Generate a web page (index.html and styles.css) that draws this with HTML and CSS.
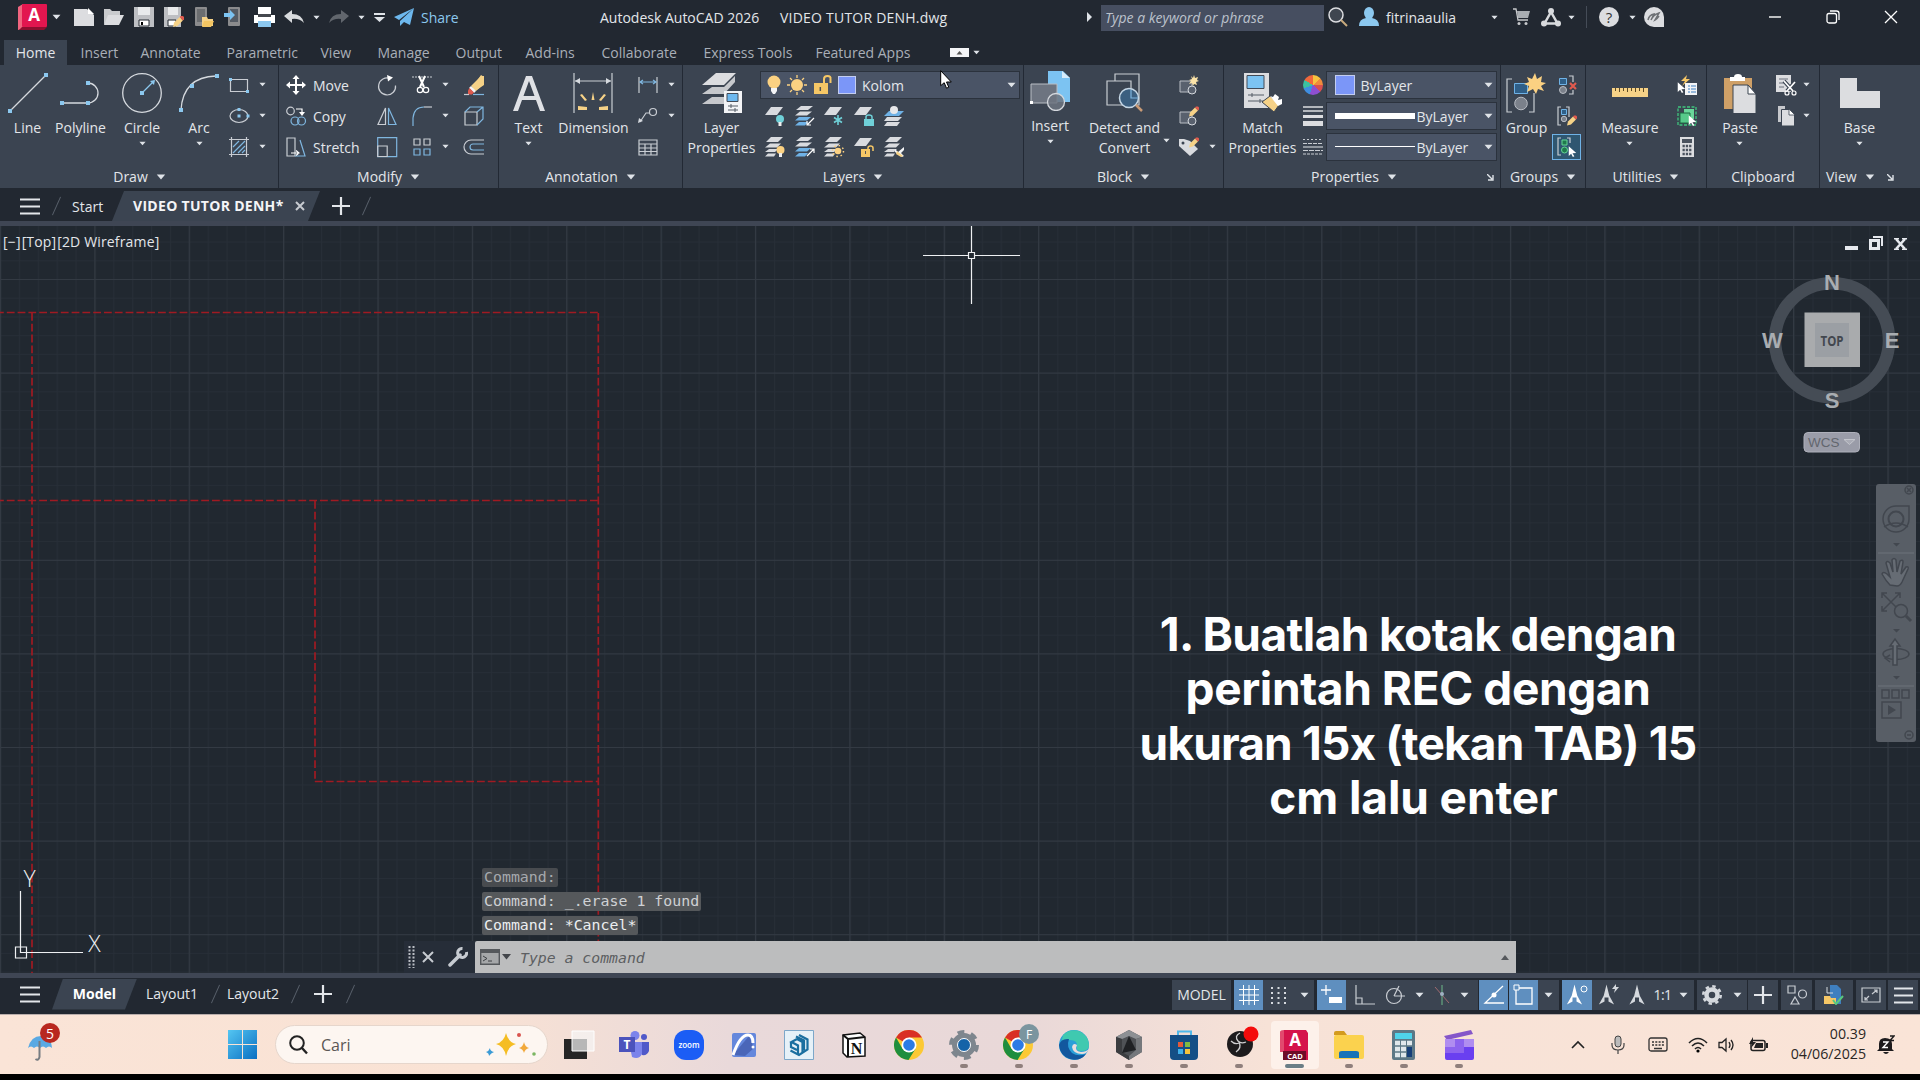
FILE: index.html
```html
<!DOCTYPE html>
<html lang="en">
<head>
<meta charset="utf-8">
<title>Autodesk AutoCAD 2026</title>
<link rel="stylesheet" href="styles.css">
</head>
<body>
<svg class="defs" width="0" height="0">
  <defs>
    <symbol id="car" viewBox="0 0 8 5"><path d="M0.5 0.5h7L4 4.5z" fill="#dfe3e8"/></symbol>
    <symbol id="sheet" viewBox="0 0 20 20"><path d="M7 1h12l-6 8H1z" fill="#d9dbdf"/></symbol>
    <symbol id="stack" viewBox="0 0 20 20"><path d="M6 0h12l-5 5H1z" fill="#d9dbdf"/><path d="M5 6.500h11l-4 4H0zM4 12h9l-3 3H0zM3 16.500h8l-2 3H0z" fill="#d9dbdf"/></symbol>
    <symbol id="stackb" viewBox="0 0 20 20"><path d="M6 0h12l-5 4H1z" fill="#d9dbdf"/><path d="M5 5.500h12l-5 4H0z" fill="#d9dbdf"/><path d="M4 11h12l-4 3.500H0zM4 16h9l-3 3.500H0z" fill="#6fb2e6"/></symbol>
    <symbol id="arr" viewBox="0 0 12 14"><path d="M1 0l10 9-5 .3 2.500 4-2 1-2.300-4.300L1 13z" fill="#fff"/></symbol>
    <symbol id="pencil" viewBox="0 0 10 10"><path d="M0 10l1-4 5-5 3 3-5 5z" fill="#f6d287"/><path d="M6 1l1-1h2l1 1v2L9 4z" fill="#e05a4e"/></symbol>
    <symbol id="chrome" viewBox="0 0 30 30"><circle cx="15" cy="15" r="15" fill="#fcc934"/><path d="M15 15L2 7.500A15 15 0 0 1 28 7.500H15z" fill="#d93025"/><path d="M2 7.500A15 15 0 0 0 14.500 30L21.500 18.700 8.500 18.700z" fill="#1e8e3e"/><circle cx="15" cy="15" r="7.500" fill="#fff"/><circle cx="15" cy="15" r="5.800" fill="#2c7be5"/></symbol>
    <symbol id="compass" viewBox="0 0 20 30"><path d="M10 2l3.500 14 6 11-7-4v-5h-5v5l-7 4 6-11z" fill="currentColor"/></symbol>
  </defs>
</svg>

<header class="titlebar">
  <svg width="30" height="28" viewBox="0 0 30 28"><path d="M1 4l5-3v25l-5 1z" fill="#f0657f"/><rect x="5" y="1" width="25" height="23" rx="1" fill="#e2164f"/><path d="M5 24h25l-3 3H2z" fill="#8d0f2f"/><text x="17" y="18" class="logo-a">A</text></svg>
  <svg width="9" height="6"><use href="#car"/></svg><i></i>
  <svg width="20" height="18" viewBox="0 0 20 18"><path d="M0 1h13l7 6v11H0z" fill="#dcdde0"/><path d="M14 0v6h6z" fill="#fff"/></svg>
  <svg width="20" height="18" viewBox="0 0 20 18"><path d="M0 17V1h6l2 2h8v4H6z" fill="#c9cbce"/><path d="M4 7h16l-5 10H0z" fill="#dcdde0"/></svg>
  <svg width="20" height="20"><path d="M0 0h20v20H0z" fill="#bdbfc3"/><path d="M4 0h12v8H4z" fill="#e8eaec"/><path d="M5 13h10v6H5z" fill="#fff" stroke="#222831"/><path d="M7 15h2v3H7z"/></svg>
  <svg width="20" height="20"><path d="M0 0h17v20H0z" fill="#bdbfc3"/><path d="M4 0h10v8H4z" fill="#e8eaec"/><path d="M4 13h8v6H4z" fill="#fff" stroke="#222831"/><use href="#pencil" x="9" y="9" width="11" height="11"/></svg>
  <svg width="20" height="20"><rect x="1" width="12" height="19" rx="1" fill="#8b8b8d"/><path d="M3 2h8v13H3z" fill="#6b6d70"/><path d="M8 10h5l1 2h5v7H8z" fill="#f6d287"/><path d="M10 14h10l-3 6H8z" fill="#f3c562"/></svg>
  <svg width="20" height="20"><rect x="4" width="12" height="19" rx="1" fill="#8b8b8d"/><path d="M6 2h8v13H6z" fill="#555b64"/><path d="M0 6h6V3l5 5-5 5v-3H0z" fill="#7cc3f2"/></svg>
  <svg width="21" height="20"><path d="M4 0h13v7H4zM0 8h21v8H0z" fill="#fff"/><path d="M4 7h13v3H4z" fill="#45484e"/><path d="M4 14h13v6H4z" fill="#8cc8ef"/></svg>
  <svg width="20" height="14"><path d="M0 6l8-6v4q10 0 12 9-5-5-12-4v4z" fill="#d8dadd"/></svg>
  <svg width="7" height="5"><use href="#car"/></svg>
  <svg width="20" height="14" opacity=".35"><path d="M20 6l-8-6v4Q2 4 0 13q5-5 12-4v4z" fill="#d8dadd"/></svg>
  <svg width="7" height="5"><use href="#car"/></svg>
  <svg width="11" height="9"><path d="M0 0h11v2H0zM0 4h11L5.500 9z" fill="#dfe3e8"/></svg>
  <svg width="20" height="18"><path d="M20 0L0 9l5 3zM20 0L6 13v5l4-4 6 3z" fill="#6db8ee"/></svg><i></i>
  <span class="share">Share</span>
  <span class="t">Autodesk AutoCAD 2026</span>
  <span class="t doc">VIDEO TUTOR DENH.dwg</span>
  <svg width="6" height="10"><path d="M0 0l5 5-5 5z" fill="#dfe3e8"/></svg><i></i>
  <span class="search">Type a keyword or phrase</span>
  <svg width="20" height="20"><circle cx="8" cy="8" r="7" fill="#3f4650" stroke="#dcdde0" stroke-width="1.500"/><path d="M13 13l6 6" stroke="#c9ab7e" stroke-width="2"/></svg>
  <svg width="20" height="20"><ellipse cx="10" cy="6" rx="5" ry="6" fill="#8cc8ef"/><path d="M0 19q0-7 7-8h6q7 1 7 8z" fill="#8cc8ef"/></svg>
  <span class="t">fitrinaaulia</span>
  <svg width="7" height="5"><use href="#car"/></svg>
  <svg width="17" height="18"><path d="M0 1h3l2 11h10" fill="none" stroke="#c7c9cc" stroke-width="1.300"/><path d="M4 3h13l-2 7H5z" fill="#a9adb2"/><circle cx="6" cy="15.500" r="1.500" fill="#c7c9cc"/><circle cx="13" cy="15.500" r="1.500" fill="#c7c9cc"/></svg>
  <svg width="20" height="19"><path d="M10 4L3.500 15.500h13z" fill="none" stroke="#d8dadd" stroke-width="2.500"/><circle cx="10" cy="3" r="3" fill="#d8dadd"/><circle cx="3" cy="15.500" r="3" fill="#d8dadd"/><circle cx="17" cy="15.500" r="3" fill="#d8dadd"/></svg>
  <svg width="7" height="5"><use href="#car"/></svg>
  <b class="vsep"></b>
  <svg width="20" height="20"><circle cx="10" cy="10" r="10" fill="#dcdde0"/><text x="10" y="15.500" class="qm">?</text></svg>
  <svg width="7" height="5"><use href="#car"/></svg>
  <svg width="20" height="20"><path d="M10 0a10 10 0 0 1 10 10v10H10A10 10 0 0 1 10 0z" fill="#dcdde0"/><path d="M4 13q1-5 6-6l-3 6q2-5 8-7l-4 7q2-1 4-4" fill="none" stroke="#6d7074" stroke-width="1.500"/></svg><i></i>
  <svg width="12" height="2"><path d="M0 1h12" stroke="#fff" stroke-width="1.400"/></svg>
  <svg width="14" height="14"><rect x="1" y="3.500" width="9.500" height="9.500" rx="2" fill="none" stroke="#fff" stroke-width="1.300"/><path d="M4 1h6.500q2.500 0 2.500 2.500V10" fill="none" stroke="#fff" stroke-width="1.300"/></svg>
  <svg width="14" height="14"><path d="M1 1l12 12M13 1L1 13" stroke="#fff" stroke-width="1.300"/></svg>
</header>

<nav class="tabs">
  <span class="on">Home</span><i></i><span>Insert</span><span>Annotate</span><span>Parametric</span><span>View</span><span>Manage</span><span>Output</span><span>Add-ins</span><span>Collaborate</span><span>Express Tools</span><span>Featured Apps</span>
  <svg width="19" height="9"><path d="M0 0h19v9H0z" fill="#f4f5f7"/><path d="M6.500 6.500h6l-3-3.500z" fill="#555"/></svg>
  <svg class="mid" width="7" height="5"><use href="#car"/></svg>
</nav>

<section class="ribbon">
  <div class="panel draw"><div class="body">
    <div class="big"><svg width="40" height="40"><path d="M2 38L38 2" stroke="#d5d9de" stroke-width="1.300"/><path d="M0 36h4v4H0zM36 0h4v4h-4z" fill="#8cc8ef"/></svg><span>Line</span></div>
    <div class="big"><svg width="40" height="40"><path d="M2 30h26a10 10 0 0 0 0-20" fill="none" stroke="#d5d9de" stroke-width="1.300"/><path d="M0 28h4v4H0zM26 28h4v4h-4zM26 8h4v4h-4z" fill="#8cc8ef"/></svg><span>Polyline</span></div>
    <div class="big"><svg width="40" height="40"><circle cx="20" cy="20" r="19.300" fill="none" stroke="#d5d9de" stroke-width="1.300"/><path d="M20 20L32 8" stroke="#8cc8ef" stroke-width="1.300"/><path d="M18 18h4v4h-4zM28 8l5-1-1 5z" fill="#8cc8ef"/></svg><span>Circle</span><svg class="dd"><use href="#car"/></svg></div>
    <div class="big"><svg width="40" height="40"><path d="M2 37Q4 4 37 3" fill="none" stroke="#d5d9de" stroke-width="1.300"/><path d="M0 35h4v4H0zM11 11h4v4h-4zM36 1h4v4h-4z" fill="#8cc8ef"/></svg><span>Arc</span><svg class="dd"><use href="#car"/></svg></div>
    <svg class="s"><path d="M1.500 4.500h17v12h-17z" class="ln"/><path d="M0 3h3v3H0zM17 15h3v3h-3z" fill="#8cc8ef"/></svg><svg class="c"><use href="#car"/></svg>
    <svg class="s"><ellipse cx="10" cy="10" rx="9" ry="6.500" class="ln"/><path d="M8.500 8.500h3v3h-3zM8.500 2h3v3h-3zM17.500 8.500h3v3h-3z" fill="#8cc8ef"/></svg><svg class="c"><use href="#car"/></svg>
    <svg class="s"><path d="M2.500 0v20M17.500 0v20M0 2.500h20M0 17.500h20" class="ln"/><path d="M4 10l6-6M4 16L16 4M9 16l7-7M13 16l3-3" class="lb"/></svg><svg class="c"><use href="#car"/></svg>
  </div><h4>Draw<svg class="hd"><use href="#car"/></svg></h4></div>

  <div class="panel modify"><div class="body">
    <svg class="s"><path d="M10 0l3.500 4H11v5h5V6.500l4 3.500-4 3.500V11h-5v5h2.500L10 20l-3.500-4H9v-5H4v2.500L0 10l4-3.500V9h5V4H6.500z" fill="#fff"/></svg><span>Move</span>
    <svg class="s"><path d="M13 3.500a8.500 8.500 0 1 0 5.500 7" class="ln"/><path d="M10 0l6 2.500-5 4z" fill="#fff"/></svg>
    <svg class="s"><path d="M0 2h20" class="ln" stroke-dasharray="2 1"/><path d="M7 1l5 11M13 1L8 12" stroke="#fff" stroke-width="2"/><circle cx="8" cy="15" r="2.700" class="lw"/><circle cx="14" cy="15" r="2.700" class="lw"/></svg><svg class="c"><use href="#car"/></svg>
    <svg class="s"><path d="M17 0l3 2v8l-9 6-3-3z" fill="#f6d287"/><path d="M17 1h3v8l-8 7-5-5z" fill="#f6d287"/><path d="M7 11l5 5-2 2-5-5z" fill="#f3f4f6"/><path d="M5.500 13l4.500 4.500-2 2H4v-4z" fill="#e05a4e"/><path d="M0 19.500h5" class="ln"/><path d="M9 19.500h11" class="lb"/></svg>
    <svg class="s"><circle cx="4.500" cy="5" r="3.800" class="ln"/><path d="M10 3h6v4" class="lw"/><path d="M13 6h6l-3 4z" fill="#fff"/><circle cx="9" cy="15" r="4" class="lb"/><circle cx="15.500" cy="15" r="4" class="lb"/></svg><span>Copy</span>
    <svg class="s"><path d="M8.500 2v16.500H1z" class="ln"/><path d="M11.500 2v16.500H19z" class="lb"/></svg>
    <svg class="s"><path d="M1 20V12" class="lb"/><path d="M1 12Q2 1 12 1" class="lb"/><path d="M12 1h8" class="ln"/></svg><svg class="c"><use href="#car"/></svg>
    <svg class="s"><path d="M1 6h12v13H1z" class="ln"/><path d="M1 6l5-5h13v12l-6 6M13 6l6-5" class="lb"/></svg>
    <svg class="s"><path d="M1 1h8v18H1z" class="ln"/><path d="M9 19h10L14 3" class="lb"/><path d="M5 16h7M10 13.500l3 2.500-3 2.500" class="lw"/></svg><span>Stretch</span>
    <svg class="s"><path d="M.7.7h19v19H.7z" class="lb"/><path d="M.7 9h9.500v10.500H.7z" class="ln"/></svg>
    <svg class="s"><path d="M2 2h6v6H2zM12 2h6v6h-6z" class="ln"/><path d="M2 12h6v6H2zM12 12h6v6h-6z" class="lb"/></svg><svg class="c"><use href="#car"/></svg>
    <svg class="s"><path d="M20 3H7a7 7 0 0 0 0 14h13" class="ln"/><path d="M20 7H9a3 3 0 0 0 0 6h11" class="lb"/></svg>
  </div><h4>Modify<svg class="hd"><use href="#car"/></svg></h4></div>

  <div class="panel annot"><div class="body">
    <div class="big"><svg width="40" height="40"><path d="M4 38L17 3h6l13 35h-5l-4-11H13L9 38zM14.500 23h11L20 8z" fill="#dfe1e5" fill-rule="evenodd"/></svg><span>Text</span><svg class="dd"><use href="#car"/></svg></div>
    <div class="big"><svg width="40" height="40"><path d="M1 0v40M39 0v40M2 8h36" class="ln"/><path d="M2 8l5-3v6zM38 8l-5-3v6z" fill="#d5d9de"/><path d="M18.500 27L20 19l1.500 8zM12 28l-5-6 2-1 5 6zM28 28l5-6-2-1-5 6zM5 33l9 1v3H5zM35 33l-9 1v3h9z" fill="#f6d287"/></svg><span>Dimension</span></div>
    <svg class="s"><path d="M1 2v16M19 2v16" class="ln"/><path d="M2 7h16M5 5L2 7l3 2M15 5l3 2-3 2" class="lb"/></svg><svg class="c"><use href="#car"/></svg>
    <svg class="s"><circle cx="15" cy="6" r="3.500" class="ln"/><path d="M12 7H8l-6 9" class="ln"/><path d="M0 17l1-5 4 3z" fill="#d5d9de"/></svg><svg class="c"><use href="#car"/></svg>
    <svg class="s"><path d="M1 3h18v15H1zM1 7h18M1 11h18M1 14.500h18M7 7v11M13 7v11" class="ln"/></svg><i></i>
  </div><h4>Annotation<svg class="hd"><use href="#car"/></svg></h4></div>

  <div class="panel layers"><div class="body">
    <div class="big"><svg width="40" height="40"><path d="M14 0h20L22 12H0z" fill="#dcdde0"/><path d="M10 14h12l11-11v6L22 21H0zM10 24h12v7H0z" fill="#c6c8cc"/><path d="M22 18h18v22H22z" fill="#f3f4f6"/><path d="M25 20.500h11v8H25z" fill="#6db8ee" stroke="#434b57"/><path d="M26 33h10M26 37h10M29 31v4M33 35v4" stroke="#555c66"/></svg><span>Layer<br>Properties</span></div>
    <div class="lcol">
      <div class="combo lay">
        <svg width="14" height="20"><circle cx="7" cy="7" r="6.500" fill="#fbd182"/><path d="M4 13h6v3l-2 3H6l-2-3z" fill="#f3f4f6"/></svg>
        <svg width="20" height="20"><circle cx="10" cy="10" r="6" fill="#fbd182"/><path d="M10 0v3M10 17v3M0 10h3M17 10h3M3 3l2 2M15 15l2 2M17 3l-2 2M5 15l-2 2" stroke="#fbd182" stroke-width="1.300"/></svg>
        <svg width="19" height="20"><path d="M1 8h14v11H1z" fill="#f6c766"/><path d="M11 8V4q0-3 3.500-3T17.500 4v4" fill="none" stroke="#f6c766" stroke-width="2"/><path d="M7.300 12v4" stroke="#555" stroke-width="1.500"/></svg>
        <b class="sw"></b><span>Kolom</span><svg class="dd2"><use href="#car"/></svg>
      </div>
      <div class="five">
        <svg class="s"><path d="M6 1h12l-6 8H0z" fill="#d9dbdf"/><circle cx="15" cy="13" r="4" fill="#6fd0d8"/><path d="M13.500 16h3v4h-3z" fill="#eee"/></svg>
        <svg class="s"><use href="#stackb"/><path d="M19 12l-7 7M12 15v4h4" class="lw"/></svg>
        <svg class="s"><path d="M6 1h12l-6 8H0z" fill="#d9dbdf"/><path d="M14 9v10M10 11.500l8 5M18 11.500l-8 5" stroke="#6fd0d8" stroke-width="1.600"/></svg>
        <svg class="s"><path d="M6 1h12l-6 8H0z" fill="#d9dbdf"/><path d="M10 13h10v7H10z" fill="#6fd0d8"/><path d="M12 13v-2q0-2 3-2t3 2v2" fill="none" stroke="#6fd0d8" stroke-width="1.500"/></svg>
        <svg class="s"><path d="M5 5h15l-5 5H0z" fill="#6fb2e6"/><circle cx="10" cy="4" r="4" fill="#e7e8ea"/><path d="M3 11h15l-4 4H0zM3 16h13l-3 4H0z" fill="#d9dbdf"/></svg>
      </div>
      <div class="five">
        <svg class="s"><use href="#stack"/><circle cx="15.500" cy="13" r="4" fill="#fbd182"/><path d="M14 16h3v4h-3z" fill="#eee"/></svg>
        <svg class="s"><use href="#stackb"/><path d="M12 19l7-7M15 12h4v4" class="lw"/></svg>
        <svg class="s"><use href="#stack"/><circle cx="14" cy="14" r="5.500" fill="none" stroke="#fbd182" stroke-width="1.500" stroke-dasharray="1.500 2.800"/><circle cx="14" cy="14" r="3.300" fill="#fbd182"/></svg>
        <svg class="s"><path d="M6 1h12l-6 8H0z" fill="#d9dbdf"/><path d="M7 12h9v8H7z" fill="#f6c766"/><path d="M14 12v-1q0-2 2.500-2t2.500 2v3" fill="none" stroke="#f6c766" stroke-width="1.500"/><path d="M11.500 14v3" stroke="#555"/></svg>
        <svg class="s"><use href="#stack"/><path d="M11 12l3 3 6-5v3l-3 3 3 3-2 1-7-5z" fill="#f3f4f6"/><path d="M13 14l6 5-2 1-5-3z" fill="#f6d287"/></svg>
      </div>
    </div>
  </div><h4>Layers<svg class="hd"><use href="#car"/></svg></h4></div>

  <div class="panel block"><div class="body">
    <div class="big up"><svg width="40" height="40"><path d="M18 0h15l7 7v24H18z" fill="#7cc3f2"/><path d="M32 0v7h8z" fill="#d8edfb"/><path d="M1 13h26v19H1z" fill="#6d7480" stroke="#b9bdc4"/><circle cx="26" cy="31" r="8.500" fill="#6d7480" fill-opacity=".85" stroke="#d5d9de" stroke-width="1.300"/><path d="M0 30h3v3H0z" fill="#fff"/></svg><span>Insert</span><svg class="dd"><use href="#car"/></svg></div>
    <div class="big det"><svg width="40" height="40"><path d="M11 8V1h24v31h-6" class="ln"/><path d="M3 8h24v24H3z" fill="#434c5a" class="ln"/><circle cx="25" cy="25" r="9.500" fill="#3b5f80" stroke="#c5d7e6" stroke-width="1.500"/><path d="M27 17v8h7" class="lb"/><path d="M32 32l6 6" stroke="#c99a76" stroke-width="2.500"/></svg><span>Detect and<br>Convert</span><svg class="c side"><use href="#car"/></svg></div>
    <svg class="s"><path d="M1 6h12v11H1z" fill="#59616e" stroke="#b9bdc4"/><circle cx="13" cy="15" r="4" fill="#59616e" stroke="#d5d9de"/><path d="M15 0l1 3 3-1-1 3 2 1-3 1 1 3-3-1-1 2-1-3-3 1 2-3-2-1 3-1-1-3 2 2z" fill="#fbe3a8"/></svg><i></i>
    <svg class="s"><path d="M1 6h12v11H1z" fill="#59616e" stroke="#b9bdc4"/><circle cx="13" cy="15" r="4" fill="#59616e" stroke="#d5d9de"/><use href="#pencil" x="10" y="0" width="10" height="11"/></svg><i></i>
    <svg class="s"><path d="M0 2h5l6 2 8 8-8 7L0 9z" fill="#d9dbdf"/><circle cx="4" cy="6" r="1.500" fill="#3b4451"/><use href="#pencil" x="10" y="0" width="10" height="11"/></svg><svg class="c"><use href="#car"/></svg>
  </div><h4>Block<svg class="hd"><use href="#car"/></svg></h4></div>

  <div class="panel props"><div class="body">
    <div class="big"><svg width="40" height="40"><path d="M1 0h25v35H1z" fill="#dcdde0"/><path d="M4 2.500h17v13H4z" fill="#7cc3f2" stroke="#434b57"/><path d="M5 22h16M5 28h16M9 20v4M17 26v4" stroke="#555c66"/><path d="M19 29l8-6 9 9-5 7z" fill="#f6d287" stroke="#3b4451"/><path d="M27 23l3 1 2-3 4 3-1 3 4-1v5l-4 2z" fill="#fff"/></svg><span>Match<br>Properties</span></div>
    <b class="wheel"></b>
    <div class="combo"><b class="sw big2"></b><span>ByLayer</span><svg class="dd2"><use href="#car"/></svg></div>
    <svg class="s"><path d="M0 1h20M0 5h20" stroke="#dcdde0" stroke-width="1.500"/><path d="M0 10.500h20" stroke="#dcdde0" stroke-width="3"/><path d="M0 17.500h20" stroke="#dcdde0" stroke-width="5"/></svg>
    <div class="combo"><b class="bar thick"></b><span>ByLayer</span><svg class="dd2"><use href="#car"/></svg></div>
    <svg class="s"><path d="M0 2.500h20" class="ln" stroke-dasharray="2 2"/><path d="M0 6.500h20" class="ln" stroke-dasharray="4 1"/><path d="M0 10h20" class="ln"/><path d="M0 13.500h20" class="ln" stroke-dasharray="5 1"/><path d="M0 17h20" class="ln" stroke-dasharray="3 1"/></svg>
    <div class="combo"><b class="bar"></b><span>ByLayer</span><svg class="dd2"><use href="#car"/></svg></div>
  </div><h4 class="ph">Properties<svg class="hd"><use href="#car"/></svg><svg class="launch" width="7" height="7"><path d="M0 0l5 5M6 1v5H1" stroke="#dfe3e8" fill="none" stroke-width="1.400"/></svg></h4></div>

  <div class="panel groups"><div class="body">
    <div class="big"><svg width="40" height="40"><path d="M6 6H1v33h5M23 39h5V20" class="ln"/><path d="M8.500 10.500h13v10h-13z" fill="#2f5f88" stroke="#6fb2e6"/><circle cx="15" cy="30.500" r="6.300" fill="#7b818b" stroke="#b9bdc4"/><path d="M29 0l2 6 5-3-1 6 5 1-5 3 3 5-6-2-2 5-3-5-6 3 2-6-5-2 5-2-2-5 5 2z" fill="#fbd182"/></svg><span>Group</span></div>
    <svg class="s"><path d="M2.500 3.500h7v6h-7z" fill="#2f5f88" stroke="#6fb2e6"/><circle cx="6" cy="15" r="3.500" fill="#7b818b" stroke="#b9bdc4"/><path d="M12 1h4v6M16 15v4h-4" class="ln"/><path d="M13 8l6 6M19 8l-6 6" stroke="#e05a4e" stroke-width="2.200"/></svg>
    <svg class="s"><path d="M4 1H1v18h3M9 1h3v10" class="ln"/><path d="M4.500 3.500h5v5h-5z" fill="#2f5f88" stroke="#6fb2e6"/><circle cx="7" cy="13" r="2.700" fill="#7b818b" stroke="#b9bdc4"/><use href="#pencil" x="10" y="9" width="10" height="11"/></svg>
    <div class="sel"><svg class="s"><path d="M4 1H1v17h3M10 1h3v5" class="ln"/><path d="M5 3h5v5H5z" fill="#1f7a4d" stroke="#64d695"/><circle cx="7.500" cy="13" r="3" fill="#1f7a4d" stroke="#64d695"/><use href="#arr" x="11" y="9" width="9" height="11"/></svg></div>
  </div><h4>Groups<svg class="hd"><use href="#car"/></svg></h4></div>

  <div class="panel utils"><div class="body">
    <div class="big"><svg width="40" height="40"><path d="M2 15h36v9H2z" fill="#f6d287"/><path d="M5.500 15v3M9.500 15v4M13.500 15v3M17.500 15v4M21.500 15v3M25.500 15v4M29.500 15v3M33.500 15v4" stroke="#5c4a24"/></svg><span>Measure</span><svg class="dd"><use href="#car"/></svg></div>
    <svg class="s"><path d="M10 0L4 6h4l-3 5 8-7H9z" fill="#f6c766"/><path d="M8 8h12v12H8z" fill="#f3f4f6"/><path d="M11 11h2M14 11h5M11 14h2M14 14h5M11 17h2M14 17h5" stroke="#3d7fc0"/><use href="#arr" x="0" y="6" width="9" height="13"/></svg>
    <svg class="s"><path d="M1 1h18v18H1z" fill="none" stroke="#3fc57e" stroke-width="1.300" stroke-dasharray="3 1.500"/><path d="M7 3h10v10H7z" fill="#6ad79b"/><path d="M3 7h10v10H3z" fill="#57c98a" stroke="#1d6b43"/><use href="#arr" x="11" y="8" width="9" height="13"/></svg>
    <svg class="s"><path d="M3 0h14v20H3z" fill="#dcdde0"/><path d="M5 2h10v4H5z" fill="#4a525e"/><path d="M5.500 9h9M5.500 13h9M5.500 17h9" stroke="#4a525e" stroke-width="2.500" stroke-dasharray="2.300 1"/></svg>
  </div><h4>Utilities<svg class="hd"><use href="#car"/></svg></h4></div>

  <div class="panel clip"><div class="body">
    <div class="big"><svg width="34" height="40"><path d="M1 5h28v31H1z" fill="#cfa067"/><path d="M7 4h4q0-3 4-3t4 3h3v4H7z" fill="#fff"/><path d="M10 12h15l8 9v20H10z" fill="#dcdde0" stroke="#3b4451"/><path d="M25 12v9h8z" fill="#fff" stroke="#3b4451"/></svg><span>Paste</span><svg class="dd"><use href="#car"/></svg></div>
    <svg class="s"><path d="M0 0h15v17H0z" fill="#dcdde0"/><path d="M3 4h9M3 8h6M3 12h5" stroke="#6a717c"/><path d="M8 6l9 10M19 7l-8 9" stroke="#3b4451" stroke-width="4"/><path d="M8 6l9 10M19 7l-8 9" stroke="#fff" stroke-width="1.700"/><circle cx="11" cy="18" r="2" class="lw"/><circle cx="18" cy="18" r="2" class="lw"/></svg><svg class="c"><use href="#car"/></svg>
    <svg class="s"><path d="M2 0h7v16H2z" fill="#c6c8cc"/><path d="M5.500 3.500h8l5 5V20h-13z" fill="#dcdde0" stroke="#3b4451"/><path d="M13 3v6h6z" fill="#fff" stroke="#3b4451" stroke-width=".8"/></svg><svg class="c"><use href="#car"/></svg>
  </div><h4>Clipboard</h4></div>

  <div class="panel view"><div class="body">
    <div class="big"><svg width="40" height="40"><path d="M0 5h17v13h23v17H0z" fill="#dcdde0"/></svg><span>Base</span><svg class="dd"><use href="#car"/></svg></div>
  </div><h4>View<svg class="hd"><use href="#car"/></svg><svg class="launch" width="7" height="7"><path d="M0 0l5 5M6 1v5H1" stroke="#dfe3e8" fill="none" stroke-width="1.400"/></svg></h4></div>
</section>

<nav class="files">
  <svg width="20" height="17"><path d="M0 1.500h20M0 8.500h20M0 15.500h20" stroke="#e3e6ea" stroke-width="2.200"/></svg>
  <b class="slash"></b>
  <span>Start</span>
  <div class="ftab"><span>VIDEO TUTOR DENH*</span><svg width="10" height="10"><path d="M1 1l8 8M9 1L1 9" stroke="#c7cbd1" stroke-width="2"/></svg></div>
  <svg class="mid" width="18" height="18"><path d="M9 0v18M0 9h18" stroke="#e3e6ea" stroke-width="2.200"/></svg>
  <b class="slash"></b>
</nav>

<main class="canvas">
  <svg class="drawing" width="1920" height="747" viewBox="0 226 1920 747">
    <defs>
      <pattern id="minor" width="18.880" height="18.720" patternUnits="userSpaceOnUse" y="279"><path d="M0 .5h18.880M.5 0v18.720" stroke="#272e37" stroke-width="1"/></pattern>
      <pattern id="major" width="94.370" height="93.600" patternUnits="userSpaceOnUse" y="279"><path d="M0 .5h94.400M.5 0v93.700" stroke="#333a43" stroke-width="1.200"/></pattern>
    </defs>
    <rect y="226" width="1920" height="747" fill="url(#minor)"/>
    <rect y="226" width="1920" height="747" fill="url(#major)"/>
    <g fill="none" stroke="#a01a22" stroke-width="1.700" stroke-dasharray="7.800 3">
      <path d="M-4 312.500H598M-4 500.500H598M315 781.500H598"/>
      <path d="M32 313V973M315 501V782M598.300 313V973"/>
    </g>
    <g fill="none" stroke="#eef0f2" stroke-width="1.200">
      <path d="M923 255.500H968.500M974.500 255.500H1020M971.500 226V252.500M971.500 258.500V304M968.500 252.500h6v6h-6z"/>
      <path d="M20.500 891V952.500H83M15.500 947h11v11h-11z"/>
    </g>
    <text x="29.500" y="887" class="ucs">Y</text><text x="94.500" y="951.500" class="ucs">X</text>
  </svg>

  <p class="vp"><span>[−]</span><span>[Top]</span><span>[2D Wireframe]</span></p>

  <div class="winctl">
    <svg width="13" height="4"><path d="M0 0h13v4H0z" fill="#e6e9ee"/></svg>
    <svg width="14" height="14"><path d="M4 1h9v9" fill="none" stroke="#e6e9ee" stroke-width="2"/><rect x="1.500" y="4.500" width="8" height="8" fill="none" stroke="#e6e9ee" stroke-width="3"/></svg>
    <svg width="13" height="12"><path d="M2 1l9 10M11 1L2 11" stroke="#e6e9ee" stroke-width="2.600"/><path d="M0 .8h5M8 .8h5M0 11.200h5M8 11.200h5" stroke="#e6e9ee" stroke-width="1.600"/></svg>
  </div>

  <svg class="cube" width="150" height="190" viewBox="1757 268 150 190">
    <circle cx="1832" cy="341.300" r="57" fill="none" stroke="#454c55" stroke-width="12.500"/>
    <path d="M1804.500 313.500h55.500V368h-55.500z" fill="#a9abad"/><path d="M1815 324h34v34h-34z" fill="#9b9fa4"/>
    <text x="1832" y="347" class="top" textLength="23" lengthAdjust="spacingAndGlyphs">TOP</text>
    <g class="dir"><text x="1832" y="291">N</text><text x="1832" y="409">S</text><text x="1772.500" y="349">W</text><text x="1892" y="349">E</text></g>
    <rect x="1804" y="433.500" width="55.500" height="19.500" rx="4" fill="#9a9ca8" stroke="#aeb0ba"/>
    <text x="1808" y="448" class="wcs">WCS</text><path d="M1844 440.500h11l-5.500 5z" fill="#a9abb5" stroke="#c3c5cc"/>
  </svg>

  <svg class="navbar" width="40" height="258" viewBox="0 0 40 258">
    <rect width="40" height="258" rx="3" fill="#585e66"/>
    <g fill="none" stroke="#42474f" stroke-width="1.500">
      <circle cx="33" cy="6" r="4"/><path d="M31 4l4 4M35 4l-4 4"/>
      <path d="M20 22h13v13a13 13 0 1 1-13-13z"/><circle cx="20" cy="35" r="7.500" stroke-width="2"/><path d="M8 43q12-8 24 0"/>
      <path d="M2 69h36M2 202h36" stroke="#666c74"/>
      <path d="M14 101q-4-4-8-11 1-3 5 0l3 3-4-14q1-3 4 0l3 9-1-12q2-3 4 0l1 12 3-11q3-2 3 1l-2 12 5-7q3-1 2 2l-6 13q-2 4-5 4z" fill="#666c74"/>
      <path d="M6 109l18 18M24 109L6 127M6 114v-5h5M19 109h5v5M6 122v5h5"/><circle cx="25" cy="127" r="6.500" fill="#585e66"/><path d="M30 132l5 5" stroke-width="3"/>
      <ellipse cx="20" cy="170" rx="13" ry="5.500"/><path d="M17 181v-19h-3l5-7 5 7h-3v19z" fill="#666c74"/><path d="M14 171l-5 3 5 4"/>
      <path d="M6 206h7v8H6zM16 206h7v8h-7zM26 206h7v8h-7zM6 218h19v16H6z"/>
      <circle cx="33" cy="251" r="4"/><path d="M31 251h4"/>
    </g>
    <path d="M17 59h7l-3.500 3.500zM17 145h7l-3.500 3.500zM17 192h7l-3.500 3.500zM12 221l8 5-8 5z" fill="#42474f"/>
  </svg>

  <p class="caption"><span class="l1">1. Buatlah kotak dengan</span><span class="l2">perintah REC dengan</span><span class="l3">ukuran 15x (tekan TAB) 15</span><span class="l4">cm lalu enter</span></p>

  <div class="console">
    <div class="hist"><span class="old">Command:</span><span class="mid2">Command: _.erase 1 found</span><span>Command: *Cancel*</span></div>
    <div class="cmd">
      <div class="grip">
        <svg width="7" height="22"><path d="M1.500 0v22M5.500 0v22" stroke="#b9bdc4" stroke-width="2" stroke-dasharray="2 1.500"/></svg>
        <svg width="12" height="12"><path d="M1 1l10 10M11 1L1 11" stroke="#c7cbd1" stroke-width="2"/></svg>
        <svg class="wrench" width="20" height="20"><path d="M2 18L12 8" stroke="#c7cbd1" stroke-width="3.500" stroke-linecap="round"/><path d="M18.500 5a4.500 4.500 0 1 1-4-3.500" fill="none" stroke="#c7cbd1" stroke-width="3"/></svg>
      </div>
      <div class="input">
        <svg width="20" height="16"><path d="M.7.700h18.600v14.600H.7z" fill="#a5a7a9" stroke="#55585c" stroke-width="1.400"/><path d="M1 2.500h18" stroke="#55585c" stroke-width="3"/><path d="M3 7l4 2.500L3 12M8 12h4" fill="none" stroke="#3e4145"/></svg>
        <svg width="9" height="6"><path d="M0 0h9L4.500 5.500z" fill="#43464b"/></svg>
        <em>Type a command</em>
        <svg class="up2" width="8" height="5"><path d="M0 5h8L4 0z" fill="#55585c"/></svg>
      </div>
    </div>
  </div>
</main>

<footer class="status">
  <svg width="20" height="17"><path d="M0 1.500h20M0 8.500h20M0 15.500h20" stroke="#e3e6ea" stroke-width="2.200"/></svg>
  <div class="model"><b>Model</b></div>
  <span>Layout1</span><b class="slash"></b><span>Layout2</span><b class="slash"></b>
  <svg class="mid" width="18" height="18"><path d="M9 0v18M0 9h18" stroke="#e3e6ea" stroke-width="2.200"/></svg><b class="slash"></b>
  <div class="sb">
    <span class="box g1">MODEL</span>
    <span class="box blue g2"><svg width="20" height="20"><path d="M4.500 0v20M10 0v20M15.500 0v20M0 4.500h20M0 10h20M0 15.500h20" stroke="#fff"/></svg></span>
    <span class="box g3"><svg width="18" height="18"><path d="M2 2h16M2 7h16M2 12h16M2 17h16" stroke="#d5d9de" stroke-width="2" stroke-dasharray="2 4.500"/></svg><svg class="k"><use href="#car"/></svg></span>
    <span class="box blue g4"><svg width="22" height="22"><path d="M5 1v10M0 6h10" stroke="#fff" stroke-width="1.300"/><path d="M8 13h13v6H8z" fill="#fff"/></svg></span>
    <span class="box g5"><svg width="20" height="20"><path d="M1 0v19h19M1 13h6v6" class="ln"/></svg><svg width="22" height="20"><circle cx="10" cy="11" r="7.500" class="ln"/><path d="M10 11h11M10 11l5-10" class="ln"/></svg><svg class="k"><use href="#car"/></svg><svg width="18" height="20"><path d="M9 0v20" stroke="#6fb98a"/><path d="M2 2l14 16" stroke="#a06a70"/><circle cx="9" cy="9" r="2" fill="#9fb1c2"/></svg><svg class="k"><use href="#car"/></svg></span>
    <span class="box blue g6"><svg width="22" height="20"><path d="M20 1L2 18h19" stroke="#fff" fill="none" stroke-width="1.300"/><circle cx="11" cy="10" r="2.500" fill="#fff"/></svg></span>
    <span class="box blue g7"><svg width="22" height="22"><path d="M3 4h16v16H3z" stroke="#fff" fill="none" stroke-width="1.300"/><path d="M1 1h5v5H1z" fill="#5f8fbf" stroke="#fff"/></svg></span>
    <span class="box g8"><svg class="k"><use href="#car"/></svg></span>
    <span class="box blue g9"><svg width="22" height="24"><use href="#compass" width="17" height="24" color="#fff"/><circle cx="18" cy="6" r="3" fill="none" stroke="#fff"/></svg></span>
    <span class="box g10"><svg width="22" height="24"><use href="#compass" width="17" height="24" color="#d5d9de"/><path d="M18 1l-4 5h3l-1 4 5-6h-3z" fill="#d5d9de"/></svg><svg width="18" height="24"><use href="#compass" width="18" height="24" color="#d5d9de"/></svg><span>1:1</span><svg class="k"><use href="#car"/></svg></span>
    <span class="box g11"><svg width="20" height="20"><circle cx="10" cy="10" r="5.500" fill="none" stroke="#d5d9de" stroke-width="4.500"/><circle cx="10" cy="10" r="8.700" fill="none" stroke="#d5d9de" stroke-width="2.600" stroke-dasharray="3.400 3.430"/></svg><svg class="k"><use href="#car"/></svg></span>
    <span class="box g12"><svg width="18" height="18"><path d="M9 0v18M0 9h18" stroke="#e3e6ea" stroke-width="2.200"/></svg></span>
    <span class="box g13"><svg width="20" height="20"><path d="M1 1h7v7H1zM8 12l4 7H4z" class="ln"/><circle cx="15.500" cy="9" r="4" class="ln"/></svg></span>
    <span class="box g14"><svg width="20" height="20"><path d="M6 0h7l4 4v15H6z" fill="#3f7fbf"/><path d="M0 11h6l1 2h5v6H0z" fill="#f6c766"/><path d="M9 15l3 4 7-8" fill="none" stroke="#58c97e" stroke-width="2"/><path d="M3 2v6h6" fill="none" stroke="#d5d9de"/></svg></span>
    <span class="box g15"><svg width="20" height="16"><path d="M1 1h18v14H1z" class="ln"/><path d="M11 7l5-4M16 6V3h-3M8 9l-4 4M4 10v3h3" class="ln"/></svg></span>
    <span class="box g16"><svg width="19" height="17"><path d="M0 1.500h19M0 8.500h19M0 15.500h19" stroke="#e3e6ea" stroke-width="2.200"/></svg></span>
  </div>
</footer>

<div class="taskbar">
  <svg class="umb" width="36" height="42" viewBox="24 1020 36 42"><path d="M28 1047q3-12 13-12t11 12q-3-3-6 0-3-3-6 0-3-3-6 0-3-3-6 0z" fill="#5aa9e3"/><path d="M39.500 1040v16q-1 4-4 2" fill="none" stroke="#777c82" stroke-width="2"/><circle cx="50" cy="1032" r="10" fill="#b8281f"/><text x="50" y="1037.500" class="badge">5</text></svg>
  <svg class="win" width="29" height="29"><defs><linearGradient id="wg" x1="0" y1="0" x2="1" y2="1"><stop offset="0" stop-color="#54c6f2"/><stop offset="1" stop-color="#0a6fc2"/></linearGradient></defs><path d="M0 0h14v14H0zM15 0h14v14H15zM0 15h14v14H0zM15 15h14v14H15z" fill="url(#wg)"/></svg>
  <div class="find"><svg width="19" height="20"><circle cx="8" cy="8" r="6.800" fill="none" stroke="#222" stroke-width="2"/><path d="M13 13l5 5.500" stroke="#222" stroke-width="2.400"/></svg><span>Cari</span>
    <svg width="52" height="26"><path d="M20 1q2 9 10 11-8 2-10 12-2-10-10-12 8-2 10-11z" fill="#f5bd23"/><path d="M38 10q1 5 5 6-4 1-5 5-1-4-5-5 4-1 5-6z" fill="#f2a93b"/><path d="M4 16q0 3 4 4-3 1-5 4 0-3-3-4 3-1 4-4z" fill="#3b9bd6"/><circle cx="33" cy="3" r="2" fill="#d9534f"/><circle cx="48" cy="22" r="1.800" fill="#7bb662"/></svg></div>
  <div class="apps">
    <span><svg width="30" height="30"><path d="M0 9h23v20H0z" fill="#262626"/><path d="M8 1h22v20H8z" fill="#f5f5f5" fill-opacity=".7" stroke="#fff"/></svg></span>
    <span><svg width="30" height="28"><circle cx="16" cy="4.500" r="4.500" fill="#7b83eb"/><circle cx="25" cy="6" r="3" fill="#5059c9"/><path d="M20 11h10v9q-2 5-7 4z" fill="#5059c9"/><path d="M10 11h13v12q-3 6-10 3z" fill="#7b83eb"/><path d="M0 6h16v15H0z" fill="#4b53bc"/><text x="8" y="18" class="tm">T</text></svg></span>
    <span><svg width="30" height="30"><rect width="30" height="30" rx="12" fill="#1b5df5"/><text x="15" y="17.500" class="zm">zoom</text></svg></span>
    <span><svg width="26" height="26"><rect x="1" y="1" width="24" height="24" rx="2" fill="#6487dc"/><path d="M2 23l16-19 5 12-9 8z" fill="#4a66b8"/><path d="M2 23Q9 3 17 3q5 0 5 8" fill="none" stroke="#fff" stroke-width="3"/><circle cx="22" cy="15" r="1.500" fill="#fff"/></svg></span>
    <span><svg width="30" height="30"><path d="M.5.5h29v29H.5z" fill="#e6f1f8" stroke="#7da7c9"/><path d="M15 5l8.500 4.500v10L15 25l-8.500-4.500" fill="none" stroke="#1b6fa0" stroke-width="2.200"/><path d="M18.500 22V12L13 9l-5.500 3 6.500 3.500v9M7 12v5l6 3M12 6.500l8 4v10" fill="none" stroke="#1b6fa0" stroke-width="2.200"/></svg></span>
    <span><svg width="24" height="26"><path d="M1 3l17-2 5 4v19l-18 1-4-4z" fill="#fff" stroke="#111" stroke-width="1.500"/><path d="M1 3l5 4 17-2M6 7v18" stroke="#111" stroke-width="2" fill="none"/><text x="14.500" y="21.500" class="nt">N</text></svg></span>
    <span><svg width="30" height="30"><use href="#chrome"/></svg></span>
    <span class="run"><svg width="30" height="30"><circle cx="15" cy="15" r="9" fill="none" stroke="#7e868e" stroke-width="6"/><circle cx="15" cy="15" r="13" fill="none" stroke="#7e868e" stroke-width="4" stroke-dasharray="6.800 6.800"/><circle cx="15" cy="15" r="6.500" fill="#1463a8" stroke="#fff"/></svg></span>
    <span class="run"><svg class="badged" width="36" height="36"><use href="#chrome" x="0" y="6" width="30" height="30"/><circle cx="26" cy="10" r="10" fill="#7b959f"/><text x="26" y="14.500" class="fl">F</text></svg></span>
    <span class="run"><svg width="30" height="30"><circle cx="15" cy="15" r="15" fill="#2a9fd8"/><path d="M4 5a15 15 0 0 1 26 10q0 6-8 6-5 0-4-4 1-7-7-7-6 0-9 4z" fill="#3fc9b0"/><path d="M0 15Q2 8 10 9q-3 8 3 14 6 4 14 1-6 8-16 5Q1 26 0 15z" fill="#12579e"/><path d="M18 15q-3 6 4 7 5 0 8-3-2 5-7 5-9 0-10-7 1-5 5-2z" fill="#e9dedd"/></svg></span>
    <span class="run"><svg width="28" height="30"><path d="M14 0l13 7v15l-13 8L1 22V7z" fill="#4f5256"/><path d="M14 0l13 7-6 2-7-3-7 3-6-2z" fill="#8d9094"/><path d="M1 7l6 2v13l7 4v4L1 22z" fill="#3b3d40"/><path d="M14 6l7 14-14 3z" fill="#1f2124"/><path d="M27 7v15l-13 8v-4l7-6V9z" fill="#75787c"/></svg></span>
    <span class="run"><svg width="30" height="30"><path d="M9 5V1.500h13V5" fill="none" stroke="#4fb8ea" stroke-width="2"/><path d="M1 5h28v21q0 4-4 4H5q-4 0-4-4z" fill="#144f86"/><path d="M9 12h5v5H9z" fill="#e25a3a"/><path d="M16 12h5v5h-5z" fill="#7fbb42"/><path d="M9 19h5v5H9z" fill="#3fb0ea"/><path d="M16 19h5v5h-5z" fill="#f6c33b"/></svg></span>
    <span class="run"><svg class="badged" width="32" height="36"><circle cx="14" cy="20" r="13" fill="#1d1b1d"/><path d="M14 9q-6 3-2 8 3 3 8 1M13 18q3 6-3 10M13 19q-4 2-8-2" stroke="#cfcfd1" fill="none" stroke-width="1.300"/><circle cx="25" cy="10" r="7.500" fill="#f40b0b"/></svg></span>
    <span class="run act"><svg width="28" height="30"><path d="M0 2q0-2 4-2v22H0z" fill="#e2496e"/><path d="M4 0h22l2 3v27H4z" fill="#d5134b"/><path d="M3 21h23v9H3z" fill="#6d0c28"/><text x="15" y="16" class="ac">A</text><text x="15" y="28.500" class="cad">CAD</text></svg></span>
    <span class="run"><svg width="30" height="28"><path d="M0 2q0-2 2-2h8l3 4H0z" fill="#d39b1e"/><rect y="4" width="30" height="24" rx="2" fill="#fbd24e"/><path d="M5 27v-5q0-2 3-2h14q3 0 3 2v5z" fill="#1773b8"/></svg></span>
    <span class="run"><svg width="24" height="30"><rect width="23" height="30" rx="2" fill="#5d7886"/><path d="M3 3h17v6H3z" fill="#4fd3ea"/><path d="M3 13h17M3 19h11M3 25h11" stroke="#dfe7eb" stroke-width="4.500" stroke-dasharray="5 1"/><path d="M15 17h5v10h-5z" fill="#163f78"/></svg></span>
    <span class="run"><svg width="31" height="30"><path d="M0 6L27 0l2 4L3 10z" fill="#8556c9"/><path d="M1 9h29v9H1z" fill="#b08df0"/><path d="M1 17h29v11q0 2-2 2H3q-2 0-2-2z" fill="#6a3ff0"/><path d="M11 9h9v14H1v-6h10z" fill="#8d63ee"/></svg></span>
  </div>
  <div class="tray">
    <svg width="14" height="9"><path d="M1 8l6-6 6 6" fill="none" stroke="#222" stroke-width="1.600"/></svg>
    <svg width="14" height="20"><rect x="4" y="1" width="6" height="11" rx="3" fill="#bbb" stroke="#444"/><path d="M1 8v2q0 5 6 5t6-5V8M7 15v4" fill="none" stroke="#444" stroke-width="1.200"/></svg>
    <svg width="20" height="16"><rect x="1" y="1" width="18" height="13" rx="2" fill="none" stroke="#333" stroke-width="1.300"/><path d="M4 5h12M4 8h12" stroke="#333" stroke-width="1.500" stroke-dasharray="2 1.300"/><path d="M6 11.500h8" stroke="#333" stroke-width="1.500"/></svg>
    <svg width="20" height="16"><path d="M1 6q9-9 18 0M4 9q6-6 12 0M7 12q3-3 6 0" fill="none" stroke="#222" stroke-width="1.600"/><circle cx="10" cy="14" r="1.600"/></svg>
    <svg width="18" height="16"><path d="M1 5.500h3L8 2v12l-4-3.500H1z" fill="none" stroke="#222" stroke-width="1.300"/><path d="M11 5q2 3 0 6M13 3q4 5 0 10" fill="none" stroke="#222" stroke-width="1.300"/></svg>
    <svg width="21" height="16"><rect x="3" y="3.500" width="14" height="10" rx="2" fill="none" stroke="#222" stroke-width="1.500"/><path d="M8 6h7v5H6zM18 6h2v5h-2z" fill="#222"/><path d="M5 0L1 7h3l-1 4 5-6H5z" fill="#222"/></svg>
    <p class="clock">00.39<br>04/06/2025</p>
    <svg width="18" height="20"><path d="M2 14V9q0-6 6-6 7 0 7 6v5l2 2H0zM6 17h6q-3 4-6 0z" fill="#1d1b1d"/><path d="M6 7h5l-5 5.500h5" fill="none" stroke="#fff" stroke-width="1.400"/><path d="M13 1h4l-4 4.500h4" fill="none" stroke="#1d1b1d" stroke-width="1.400"/></svg>
  </div>
</div>
<svg class="cursor" width="13" height="20"><path d="M.7.7v15l3.500-3 2.300 5.500 2.300-1-2.300-5.200h4.800z" fill="#fff" stroke="#000"/></svg>
</body>
</html>
```
FILE: styles.css
```css
* { box-sizing: border-box; margin: 0; padding: 0; }
body { width: 1920px; height: 1080px; overflow: hidden; background: #000; font: 14px/20px "Open Sans", "Noto Sans", sans-serif; color: #e3e6ea; display: grid; grid-template-rows: 36px 29px 123px 33px 5px 747px 5px 36px 60px 6px; }
svg { display: block; flex: none; }
.defs { position: absolute; }
span, p { white-space: nowrap; }

.titlebar { grid-row: 1; background: #222831; display: grid; align-items: center; justify-items: center; padding: 0 0 2px 15px;
  grid-template-columns: 34px 15px 5px 30px 30px 30px 30px 30px 30px 30px 30px 14px 32px 12px 24px 26px 4px 179px 180px 304px 12px 5px 223px 28px 34px 100px 17px 36px 24px 16px 14px 32px 14px 30px 77px 58px 58px 58px; }
.titlebar span { justify-self: start; padding-top: 2px; }
.titlebar .doc { letter-spacing: .22px; }
.titlebar .share { color: #8cc8ef; }
.titlebar .search { width: 223px; height: 26px; background: #464e60; padding: 3px 4px; font-style: italic; color: #bcc2cc; margin-top: 2px; }
.vsep { width: 1px; height: 22px; background: #454c57; }
.logo-a { font: bold 17px "Open Sans", sans-serif; fill: #fff; text-anchor: middle; }
.qm { font: 15px "Open Sans", sans-serif; fill: #333; text-anchor: middle; }

.tabs { grid-row: 2; background: #222831; display: grid; align-items: center; padding: 4px 0 0 4px; color: #a9afb8;
  grid-template-columns: 63px 13.5px 60px 86px 94px 57px 78px 70px 76px 102px 112px 134px 20px 14px; }
.tabs .on { background: #3b4451; height: 25px; line-height: 25px; text-align: center; color: #e3e6ea; }
.mid { justify-self: center; }

.ribbon { grid-row: 3; display: grid; background: #3b4451; padding-left: 1px;
  grid-template-columns: 278px 220px 184px 341px 200px 277px 85px 121px 113px 101px; }
.panel { border-right: 1px solid #222934; display: flex; flex-direction: column; }
.view { border: 0; }
.body { height: 99px; padding-top: 4px; display: grid; grid-template-rows: 31px 31px 31px; place-items: center; }
.body > span { justify-self: start; padding-top: 2px; }
.big { grid-row: 1 / 4; align-self: start; padding-top: 4px; display: flex; flex-direction: column; align-items: center; text-align: center; position: relative; }
.big span { margin-top: 5px; }
.up { padding-top: 2px; }
.dd { width: 7px; height: 5px; margin-top: 3px; }
.c { width: 7px; height: 5px; }
.side { position: absolute; right: -10px; top: 69px; }
.s { width: 20px; height: 20px; overflow: visible; }
.ln, .lb, .lw { fill: none; stroke: #c9cdd3; stroke-width: 1.2; }
.lb { stroke: #7fb6df; }
.lw { stroke: #fff; }
.draw .body { grid-template-columns: 53px 53px 70px 44px 36px 10px; }
.modify .body { grid-template-columns: 34px 60px 28px 41px 7px 50px; }
.annot .body { grid-template-columns: 59px 71px 38px 8px; }
.layers .body { grid-template-columns: 77px 260px; }
.block .body { grid-template-columns: 52px 97px 31px 16px; }
.props .body { grid-template-columns: 77px 24px 172px; }
.groups .body { grid-template-columns: 51px 29px; }
.utils .body { grid-template-columns: 88px 26px; }
.clip .body { grid-template-columns: 66px 26px 14px; }
.view .body { grid-template-columns: 79px; }
.lcol { grid-row: 1 / 4; display: grid; grid-template-rows: 31px 31px 31px; width: 260px; align-items: center; }
.five { display: grid; grid-template-columns: repeat(5, 29.8px); justify-items: center; }
.combo { width: 171px; height: 28px; background: #4a5466; border: 1px solid #2b323d; display: flex; align-items: center; padding-left: 8px; }
.combo.lay { width: 260px; padding-left: 6px; gap: 6px; }
.combo .sw { width: 18px; height: 18px; background: #7b96f8; border: 1px solid #c3cdf0; }
.combo .big2 { width: 20px; height: 20px; margin-right: 6px; }
.combo span { padding-top: 2px; }
.bar { width: 80px; height: 1px; background: #fff; margin-right: 2px; }
.thick { height: 6px; }
.dd2 { width: 9px; height: 6px; margin-left: auto; margin-right: 3px; }
.wheel { width: 20px; height: 20px; border-radius: 50%; background: conic-gradient(#f6c23f 0 45deg, #f08a3c 45deg 90deg, #d94f4f 90deg 135deg, #8e4fd0 135deg 200deg, #3f8ee0 200deg 250deg, #3cc0a0 250deg 300deg, #f0683c 300deg); }
.sel { width: 29px; height: 26px; background: #2f5670; border: 1px solid #6fb2e6; display: grid; place-items: center; }
h4 { font-weight: 400; font-size: 14px; height: 24px; line-height: 24px; padding-top: 1px; display: flex; align-items: center; justify-content: center; gap: 8px; position: relative; }
.hd { width: 10px; height: 6px; }
.ph { padding-right: 16px; }
.launch { position: absolute; right: 6px; top: 10px; }
.view .launch { right: 27px; }
.view h4 { justify-content: flex-start; padding-left: 6px; }

.files { grid-row: 4; background: #222831; display: grid; align-items: center; padding: 3px 0 0 20px; grid-template-columns: 20px 32px 40px 208px 41px 10px; }
.slash { width: 1px; height: 20px; background: #59606b; transform: rotate(24deg); justify-self: center; }
.files > span { padding-top: 2px; }
.ftab { height: 30px; background: #3b4451; clip-path: polygon(12px 0, 100% 0, calc(100% - 12px) 100%, 0 100%); display: flex; align-items: center; padding-left: 21px; gap: 11px; font-weight: 700; color: #f4f5f7; }
.ftab span { letter-spacing: .3px; }
body { background-image: linear-gradient(#3f4654, #3f4654), linear-gradient(#3f4654, #3f4654); background-size: 1920px 5px, 1920px 5px; background-position: 0 221px, 0 973px; background-repeat: no-repeat; }

.canvas { grid-row: 6; position: relative; background: #212830; overflow: hidden; }
.drawing { position: absolute; inset: 0; }
.ucs { font: 300 23px "Open Sans", sans-serif; fill: #eef0f2; text-anchor: middle; }
.vp { position: absolute; left: 3px; top: 6px; letter-spacing: .15px; }
.vp span { margin-right: 1px; }
.winctl { position: absolute; right: 14px; top: 10px; display: flex; gap: 11px; align-items: flex-end; }
.cube { position: absolute; left: 1757px; top: 41px; }
.top { font: bold 15px "Open Sans", sans-serif; fill: #42474e; text-anchor: middle; }
.dir { font: bold 22px "Liberation Sans", sans-serif; fill: #a9adb1; text-anchor: middle; }
.wcs { font: 13.5px "Liberation Sans", sans-serif; fill: #62666e; }
.navbar { position: absolute; left: 1876px; top: 258px; }
.caption { position: absolute; left: 1118px; top: 381px; width: 600px; display: flex; flex-direction: column; align-items: center; font: 700 46px/54.3px Inter, sans-serif; color: #fff; }
.l1 { letter-spacing: -.62px; } .l2 { letter-spacing: -.4px; } .l3 { letter-spacing: -.85px; } .l4 { letter-spacing: -.1px; margin-right: 9px; }
.console { position: absolute; left: 404px; bottom: 0; width: 1112px; }
.hist { padding: 0 0 6px 78px; display: flex; flex-direction: column; align-items: flex-start; gap: 5px; font: 14.9px/19px "DejaVu Sans Mono", monospace; color: #eceef0; }
.hist span { background: #55585b; padding: 0 2px; border-radius: 2px; }
.hist .old { background: #484b4f; color: #a6a9ad; }
.hist .mid2 { color: #cfd1d4; }
.cmd { display: flex; height: 32px; }
.grip { width: 71px; background: #262d38; display: flex; align-items: center; padding-left: 4px; gap: 7px; }
.wrench { margin-left: 7px; }
.input { flex: 1; background: #bcbdbe; border-radius: 2px 0 0 0; display: flex; align-items: center; padding: 0 7px 0 5px; gap: 2px; }
.input em { font: italic 14.8px "DejaVu Sans Mono", monospace; color: #5c5f62; margin-left: 7px; }
.up2 { margin-left: auto; }

.status { grid-row: 8; background: #222831; display: grid; align-items: center; padding: 0 0 4px 20px; grid-template-columns: 20px 106px 58px 23px 58px 20px 36px 18px 1fr; }
.model { height: 31px; margin-left: 12px; width: 85px; background: #3b4451; clip-path: polygon(11px 0, 100% 0, calc(100% - 12px) 100%, 0 100%); display: grid; place-items: center; color: #fff; }
.sb { display: flex; height: 30px; padding-left: 813px; margin-top: 2px; }
.box { background: #3b4451; height: 30px; display: flex; align-items: center; justify-content: center; gap: 8px; }
.blue { background: #5f8fbf; }
.k { width: 9px; height: 6px; }
.g1 { width: 59px; margin-right: 3px; } .g2 { width: 29px; } .g3 { width: 51px; margin-right: 3px; gap: 13px; } .g4 { width: 29px; }
.g5 { width: 132px; margin-right: 1px; gap: 9px; } .g6 { width: 29px; margin-right: 1px; } .g7 { width: 29px; } .g8 { width: 21px; margin-right: 3px; }
.g9 { width: 30px; } .g10 { width: 102px; margin-right: 3px; } .g10 span { letter-spacing: -.6px; } .g11 { width: 50px; margin-right: 1px; gap: 11px; }
.g12 { width: 30px; margin-right: 3px; } .g13 { width: 31px; margin-right: 3px; } .g14 { width: 38px; margin-right: 3px; } .g15 { width: 30px; margin-right: 2px; } .g16 { width: 30px; }

.taskbar { grid-row: 9; display: grid; align-items: center; grid-template-columns: 24px 204px 47px 276px 935px 1fr; background: linear-gradient(90deg, #fae4d7 0, #f9e2d4 25%, #e9d9da 38%, #e9d8d8 53%, #f7e2d7 66%, #fae4d7 100%); border-top: 1px solid #b9aeac; }
.umb { grid-column: 2; margin-top: -6px; }
.find { width: 273px; height: 39px; border-radius: 20px; background: #fdf6f1; border: 1px solid #e6d6cc; display: flex; align-items: center; padding: 0 9px 0 13px; color: #5b5755; font-size: 16px; gap: 13px; }
.find svg:last-child { margin-left: auto; }
.apps { display: grid; grid-template-columns: repeat(17, 55.06px); }
.apps span { height: 58px; display: grid; place-items: center; position: relative; }
.apps svg { overflow: visible; }
.apps .badged { margin: -6px -5px 0 0; }
.run::after { content: ""; position: absolute; left: 23.500px; bottom: 6px; width: 8px; height: 4px; border-radius: 2px; background: #8f7f7c; }
.run.act::after { width: 19px; left: 18px; background: #6a7e86; }
.act::before { content: ""; position: absolute; inset: 5px 3px 5px 4px; background: #fdf1ea; border-radius: 4px; }
.act svg { position: relative; }
.tray { display: flex; align-items: center; padding-left: 85px; }
.tray svg:nth-child(2) { margin-left: 26px; } .tray svg:nth-child(3) { margin-left: 23px; } .tray svg:nth-child(4) { margin-left: 20px; } .tray svg:nth-child(5) { margin-left: 10px; } .tray svg:nth-child(6) { margin-left: 12px; }
.clock { margin-left: auto; margin-right: 11px; text-align: right; color: #2a2624; font-size: 14.2px; margin-top: -2px; }
.tray svg:last-child { margin-right: 26px; }
.badge { font: 14px "Open Sans", sans-serif; fill: #fff; text-anchor: middle; }
.tm, .ac, .cad, .fl, .zm, .nt { text-anchor: middle; fill: #fff; font: bold 12px "Open Sans", sans-serif; }
.ac { font-size: 17px; } .cad { font-size: 7.5px; } .zm { font-size: 8px; font-weight: 600; } .fl { font-size: 12px; font-weight: 400; }
.nt { font: bold 16px "Liberation Serif", serif; fill: #111; }
.cursor { position: absolute; left: 940px; top: 70px; }
```
